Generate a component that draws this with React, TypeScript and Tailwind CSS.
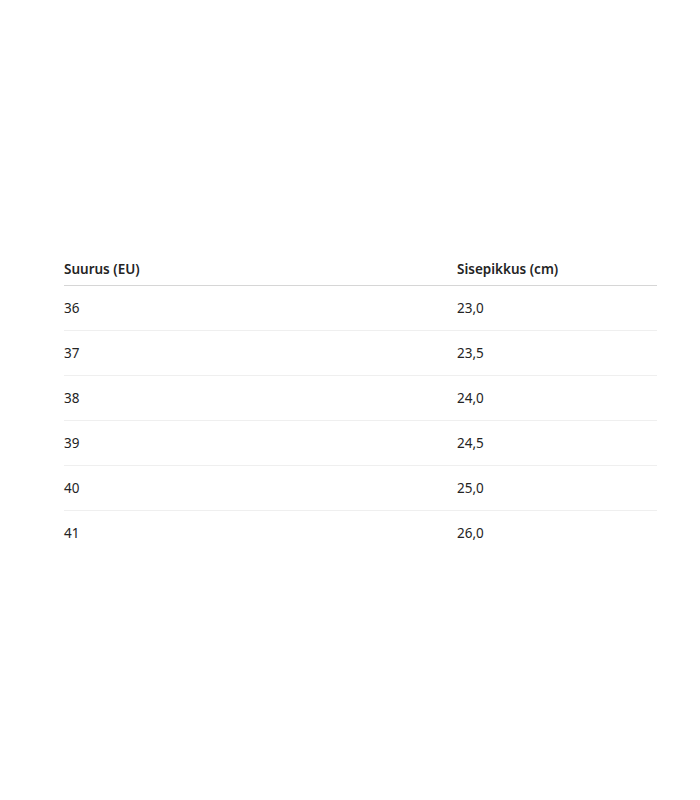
const rows = [
  { size: "36", length: "23,0" },
  { size: "37", length: "23,5" },
  { size: "38", length: "24,0" },
  { size: "39", length: "24,5" },
  { size: "40", length: "25,0" },
  { size: "41", length: "26,0" },
];

export default function App() {
  return (
    <div className="flex h-[800px] w-[700px] items-center bg-white pt-[8px] font-['Noto_Sans',sans-serif] text-[13.5px] text-[#242424]">
      <table className="ml-[64px] w-[593px] border-collapse">
        <thead>
          <tr className="h-[33px] border-b border-[#d6d6d6]">
            <th className="w-[393px] p-0 text-left font-semibold">Suurus (EU)</th>
            <th className="p-0 text-left font-semibold">Sisepikkus (cm)</th>
          </tr>
        </thead>
        <tbody>
          {rows.map((row, i) => (
            <tr
              key={row.size}
              className={i < rows.length - 1 ? "h-[45px] border-b border-[#efefef]" : "h-[45px]"}
            >
              <td className="p-0">{row.size}</td>
              <td className="p-0">{row.length}</td>
            </tr>
          ))}
        </tbody>
      </table>
    </div>
  );
}
